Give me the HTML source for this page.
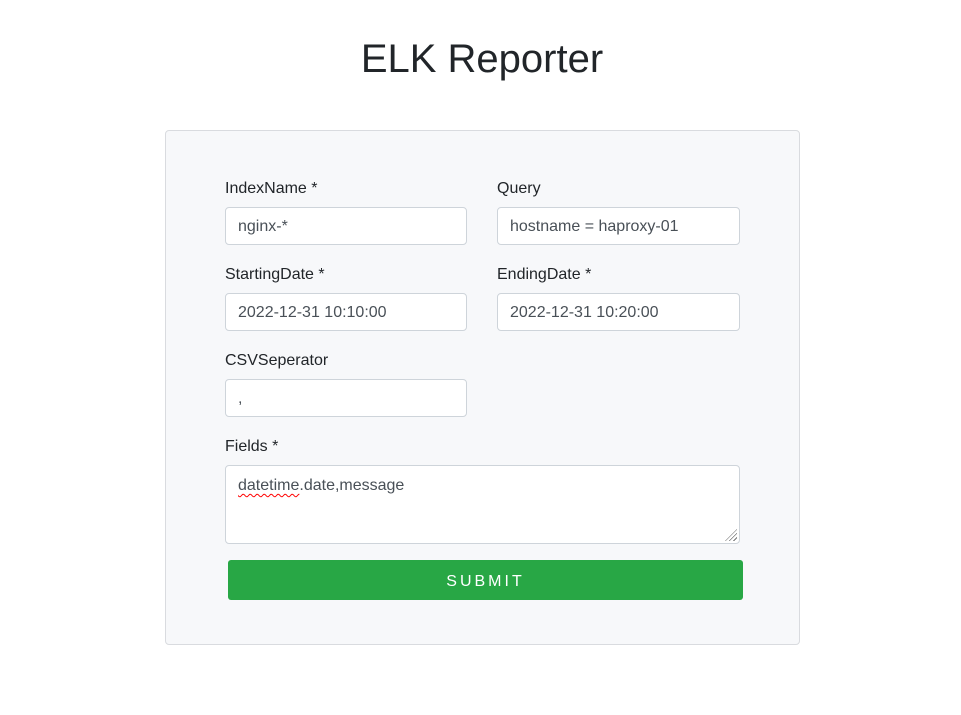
<!DOCTYPE html>
<html><head><meta charset="utf-8"><style>
body{margin:0;background:#fff;font-family:"Liberation Sans",sans-serif;color:#212529;width:961px;height:715px;position:relative;overflow:hidden}
h1{position:absolute;top:36px;left:0;width:964px;text-align:center;margin:0;font-weight:400;font-size:40px;line-height:46px}
.card{position:absolute;left:165px;top:130px;width:633px;height:513px;background:#f7f8fa;border:1px solid #d9dbdf;border-radius:4px}
.l{position:absolute;font-size:16px;line-height:18px;margin-top:1px}
.i{position:absolute;box-sizing:border-box;height:38px;width:242px;background:#fff;border:1px solid #ced4da;border-radius:4px;padding-left:12px;font-size:16px;line-height:38px;color:#495057}
.btn{position:absolute;left:228px;top:560px;width:515px;height:40px;background:#28a745;border-radius:3px;color:#fff;text-align:center;line-height:43px;font-size:16px;letter-spacing:3px}
.sq{text-decoration:underline wavy red;text-decoration-thickness:1px;text-underline-offset:3px}
.grip{position:absolute;right:2px;bottom:2px;width:12px;height:12px;background:repeating-linear-gradient(135deg,transparent 0 2px,#777 2px 3px);clip-path:polygon(100% 0,100% 100%,0 100%)}
</style></head><body>
<h1>ELK Reporter</h1>
<div class="card"></div>
<div class="l" style="left:225px;top:179px">IndexName *</div>
<div class="i" style="left:225px;top:207px">nginx-*</div>
<div class="l" style="left:497px;top:179px">Query</div>
<div class="i" style="left:497px;top:207px;width:243px">hostname = haproxy-01</div>
<div class="l" style="left:225px;top:265px">StartingDate *</div>
<div class="i" style="left:225px;top:293px">2022-12-31 10:10:00</div>
<div class="l" style="left:497px;top:265px">EndingDate *</div>
<div class="i" style="left:497px;top:293px;width:243px">2022-12-31 10:20:00</div>
<div class="l" style="left:225px;top:351px">CSVSeperator</div>
<div class="i" style="left:225px;top:379px">,</div>
<div class="l" style="left:225px;top:437px">Fields *</div>
<div class="i" style="left:225px;top:465px;width:515px;height:79px;line-height:20px;padding-top:10px"><span class="sq">datetime</span>.date,message<div class="grip"></div></div>
<div class="btn">SUBMIT</div>
</body></html>
